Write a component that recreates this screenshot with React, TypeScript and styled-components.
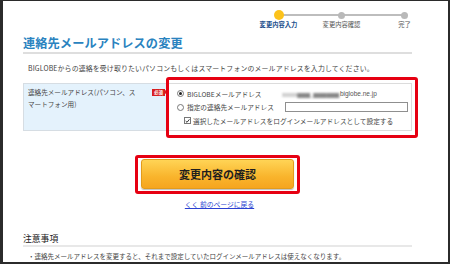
import React from "react";
import styled, { createGlobalStyle } from "styled-components";

const Global = createGlobalStyle`
  html, body { margin: 0; padding: 0; background: #fff; }
  * { box-sizing: border-box; }
  body { font-family: "Noto Sans CJK JP", "Noto Sans", sans-serif; color: #333; }
`;

const Frame = styled.div`
  width: 450px;
  height: 264px;
  overflow: hidden;
  background: #fff;
  border-style: solid;
  border-color: #2b2b2b;
  border-width: 1px 2px 2px 3px;
  padding: 0 36px 0 20px;
  display: flex;
  flex-direction: column;
`;

const Steps = styled.div`
  display: flex;
  justify-content: flex-end;
  margin-right: -24px;
  padding-top: 9px;
`;

const Step = styled.div<{ $first?: boolean }>`
  width: 63px;
  display: flex;
  flex-direction: column;
  align-items: center;
  position: relative;
  &::before {
    content: "";
    display: ${(p) => (p.$first ? "none" : "block")};
    position: absolute;
    left: -50%;
    right: 50%;
    top: 4px;
    height: 2px;
    background: #bdbdbd;
  }
`;

const Dot = styled.div`
  height: 10px;
  display: flex;
  align-items: center;
  justify-content: center;
  position: relative;
  z-index: 1;
`;

const Circle = styled.span<{ $active?: boolean }>`
  display: block;
  width: ${(p) => (p.$active ? 10 : 7)}px;
  height: ${(p) => (p.$active ? 10 : 7)}px;
  border-radius: 50%;
  background: ${(p) => (p.$active ? "#fcc21b" : "#b9b9b9")};
`;

const StepLabel = styled.span<{ $active?: boolean }>`
  margin-top: 1px;
  font-size: 6.3px;
  line-height: 8px;
  white-space: nowrap;
  color: ${(p) => (p.$active ? "#1d4f8c" : "#555")};
  font-weight: ${(p) => (p.$active ? 700 : 400)};
`;

const Title = styled.h1`
  margin: 7px 0 0;
  font-size: 12.2px;
  line-height: 14px;
  font-weight: 700;
  letter-spacing: 0.1px;
  color: #2a83bf;
  padding-bottom: 2px;
  border-bottom: 2px solid #dedede;
`;

const Desc = styled.p`
  margin: 10px 0 0 5px;
  font-size: 6.9px;
  line-height: 9px;
  letter-spacing: 0.15px;
  color: #444;
  white-space: nowrap;
`;

const Row = styled.div`
  margin-top: 10px;
  display: grid;
  grid-template-columns: 144px 1fr;
  height: 48px;
  position: relative;
`;

const LabelCell = styled.div`
  background: #e4f2fc;
  border: 1px solid #d6dde3;
  border-right: none;
  display: flex;
  align-items: flex-start;
  padding: 3px 0 0 4px;
`;

const LabelText = styled.span`
  width: 112px;
  font-size: 6.6px;
  line-height: 11.5px;
  color: #444;
`;

const Badge = styled.span`
  margin: 2px 2px 0 auto;
  position: relative;
  height: 7px;
  width: 13px;
  background: #d81e1e;
  color: #fff;
  font-size: 4.5px;
  line-height: 7px;
  text-align: center;
  font-weight: 700;
  &::after {
    content: "";
    position: absolute;
    right: -3px;
    top: 1px;
    border-left: 3px solid #d81e1e;
    border-top: 2.5px solid transparent;
    border-bottom: 2.5px solid transparent;
  }
`;

const ValueCell = styled.div`
  border: 1px solid #dcdcdc;
  background: #fff;
  padding: 3px 0 0 9px;
  display: flex;
  flex-direction: column;
`;

const OptionRow = styled.div<{ $indent?: number }>`
  height: 13.5px;
  display: flex;
  align-items: center;
  padding-left: ${(p) => p.$indent ?? 0}px;
  font-size: 6.7px;
  color: #444;
  white-space: nowrap;
`;

const OptionLabel = styled.span`
  display: flex;
  align-items: center;
  gap: 3px;
  width: 105px;
`;

const Radio = styled.span<{ $checked?: boolean }>`
  width: 7px;
  height: 7px;
  border-radius: 50%;
  border: 1px solid #777;
  background: #fff;
  display: flex;
  align-items: center;
  justify-content: center;
  flex-shrink: 0;
  &::after {
    content: "";
    display: ${(p) => (p.$checked ? "block" : "none")};
    width: 3px;
    height: 3px;
    border-radius: 50%;
    background: #222;
  }
`;

const Check = styled.span`
  width: 7px;
  height: 7px;
  border: 1px solid #777;
  background: #fff;
  display: flex;
  align-items: center;
  justify-content: center;
  margin-right: 2px;
  flex-shrink: 0;
`;

const Blur = styled.span`
  color: #888;
  filter: blur(0.8px);
  margin-right: 1px;
  letter-spacing: -0.3px;
`;

const Mail = styled.span`
  font-family: "Liberation Sans", Arial, sans-serif;
  font-size: 6.5px;
  color: #555;
`;

const TextBox = styled.span`
  width: 123px;
  height: 10px;
  border: 1px solid #8f8f8f;
  background: #fff;
  margin-left: 3px;
`;

const Highlight = styled.div<{ $inset: string }>`
  position: absolute;
  inset: ${(p) => p.$inset};
  border: 3px solid #e60012;
  border-radius: 3px;
  pointer-events: none;
`;

const ButtonWrap = styled.div`
  margin-top: 28px;
  display: flex;
  justify-content: center;
`;

const ButtonOuter = styled.div`
  position: relative;
  padding: 0 1px;
`;

const Button = styled.button`
  width: 153px;
  height: 30px;
  border: 1px solid #e39b1b;
  border-radius: 3px;
  background: linear-gradient(#ffd456, #f9b42c 60%, #f6a51f);
  box-shadow: 0 1px 1px rgba(0, 0, 0, 0.25);
  font-family: "Noto Sans CJK JP", sans-serif;
  font-size: 11px;
  font-weight: 700;
  color: #1e1e1e;
  padding: 0;
  cursor: pointer;
`;

const BackLink = styled.a`
  margin-top: 11px;
  align-self: center;
  font-size: 6.8px;
  line-height: 9px;
  color: #2a3fd1;
  text-decoration: underline;
  margin-left: 4px;
`;

const NoteTitle = styled.h2`
  margin: 24px 0 0;
  font-size: 8.8px;
  line-height: 11px;
  font-weight: 400;
  color: #222;
  padding-bottom: 1px;
  border-bottom: 2px solid #e8e8e8;
`;

const Bullet = styled.p`
  margin: 5px 0 0 5px;
  font-size: 6.5px;
  line-height: 9px;
  color: #444;
  white-space: nowrap;
`;

const steps = ["変更内容入力", "変更内容確認", "完了"];

export default function App() {
  return (
    <>
      <Global />
      <Frame>
        <Steps>
          {steps.map((s, i) => (
            <Step key={s} $first={i === 0}>
              <Dot>
                <Circle $active={i === 0} />
              </Dot>
              <StepLabel $active={i === 0}>{s}</StepLabel>
            </Step>
          ))}
        </Steps>
        <Title>連絡先メールアドレスの変更</Title>
        <Desc>
          BIGLOBEからの連絡を受け取りたいパソコンもしくはスマートフォンのメールアドレスを入力してください。
        </Desc>
        <Row>
          <LabelCell>
            <LabelText>連絡先メールアドレス(パソコン、スマートフォン用)</LabelText>
            <Badge>必須</Badge>
          </LabelCell>
          <ValueCell>
            <OptionRow>
              <OptionLabel>
                <Radio $checked />
                BIGLOBEメールアドレス
              </OptionLabel>
              <Blur>xxxxx▆▆_▆▆▆▆</Blur>
              <Mail>biglobe.ne.jp</Mail>
            </OptionRow>
            <OptionRow>
              <OptionLabel>
                <Radio />
                指定の連絡先メールアドレス
              </OptionLabel>
              <TextBox />
            </OptionRow>
            <OptionRow $indent={7}>
              <Check>
                <svg width="6" height="6" viewBox="0 0 6 6">
                  <path d="M0.8 3 L2.4 4.6 L5.3 1" fill="none" stroke="#222" strokeWidth="1.1" />
                </svg>
              </Check>
              選択したメールアドレスをログインメールアドレスとして設定する
            </OptionRow>
          </ValueCell>
          <Highlight $inset="-6px -6px -7px 143px" />
        </Row>
        <ButtonWrap>
          <ButtonOuter>
            <Button>変更内容の確認</Button>
            <Highlight $inset="-4px -5px -5px -5px" />
          </ButtonOuter>
        </ButtonWrap>
        <BackLink href="#">くく 前のページに戻る</BackLink>
        <NoteTitle>注意事項</NoteTitle>
        <Bullet>・連絡先メールアドレスを変更すると、それまで設定していたログインメールアドレスは使えなくなります。</Bullet>
      </Frame>
    </>
  );
}
